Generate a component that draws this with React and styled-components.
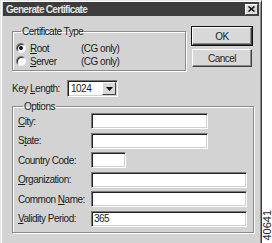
import React from 'react';
import styled, { createGlobalStyle } from 'styled-components';

const GlobalStyle = createGlobalStyle`
  html, body {
    margin: 0;
    padding: 0;
    background: #fff;
  }
  body {
    font-family: "Liberation Sans", Arial, sans-serif;
    font-size: 10px;
    letter-spacing: -0.5px;
    color: #1c1c1c;
    white-space: nowrap;
  }
`;

const Page = styled.div`
  display: flex;
  width: 272px;
  height: 243px;
  overflow: hidden;
`;

const Dialog = styled.div`
  box-sizing: border-box;
  width: 262px;
  height: 250px;
  flex-shrink: 0;
  background: #d3d3d3;
  border-top: 1px solid #e6e6e6;
  border-left: 1px solid #e6e6e6;
  border-right: 1px solid #3a3a3a;
  box-shadow: inset 1px 1px 0 #fff, inset -1px 0 0 #8a8a8a;
  padding: 1px 2px 0 2px;
`;

const TitleBar = styled.div`
  height: 14px;
  background: #3c3c3c;
  display: flex;
  align-items: center;
  justify-content: space-between;
  padding: 0 1px 0 3px;
`;

const Title = styled.span`
  color: #e4e4e4;
  font-weight: bold;
  font-size: 10px;
  letter-spacing: -0.7px;
`;

const CloseButton = styled.div`
  width: 13px;
  height: 11px;
  box-sizing: border-box;
  background: #dcdcdc;
  border-top: 1px solid #fff;
  border-left: 1px solid #fff;
  border-right: 1px solid #444;
  border-bottom: 1px solid #444;
  display: flex;
  align-items: center;
  justify-content: center;
`;

const Body = styled.div`
  padding: 9px 6px 0 9px;
`;

const TopRow = styled.div`
  display: flex;
  align-items: flex-start;
  gap: 6px;
`;

const Group = styled.fieldset`
  margin: 0;
  min-width: 0;
  box-sizing: border-box;
  width: ${(p) => p.$width}px;
  height: ${(p) => p.$height}px;
  padding: ${(p) => p.$pad};
  border: 1px solid #8a8a8a;
  box-shadow: 1px 1px 0 #fff, inset 1px 1px 0 #fff;
`;

const Legend = styled.legend`
  margin-left: 5px;
  padding: 0 1px;
  line-height: 13px;
`;

const RadioList = styled.div`
  display: flex;
  flex-direction: column;
  gap: 1px;
  padding-top: 4px;
`;

const RadioRow = styled.div`
  display: grid;
  grid-template-columns: 10px 47px auto;
  column-gap: 4px;
  align-items: center;
  height: 12px;
`;

const Radio = styled.span`
  width: 10px;
  height: 10px;
  box-sizing: border-box;
  border-radius: 50%;
  background: #fff;
  border: 1px solid;
  border-color: #7a7a7a #f4f4f4 #f4f4f4 #7a7a7a;
  box-shadow: inset 1px 1px 0 #2a2a2a;
  display: flex;
  align-items: center;
  justify-content: center;

  &::after {
    content: '';
    width: 4px;
    height: 4px;
    border-radius: 50%;
    background: ${(p) => (p.$checked ? '#111' : 'transparent')};
  }
`;

const Buttons = styled.div`
  display: flex;
  flex-direction: column;
  gap: 4px;
  margin-top: 2px;
`;

const Button = styled.div`
  width: 60px;
  height: 18px;
  box-sizing: border-box;
  background: #d8d8d8;
  display: flex;
  align-items: center;
  justify-content: center;
  border: 1px solid;
  border-color: #fff #404040 #404040 #fff;
  box-shadow: ${(p) =>
    p.$default ? '0 0 0 1px #111, inset -1px -1px 0 #8a8a8a' : 'inset -1px -1px 0 #8a8a8a'};
`;

const KeyRow = styled.div`
  display: flex;
  align-items: center;
  margin-top: 9px;
`;

const KeyLabel = styled.span`
  width: 55px;
`;

const Select = styled.div`
  width: 51px;
  height: 17px;
  box-sizing: border-box;
  background: #fff;
  border-top: 1px solid #7a7a7a;
  border-left: 1px solid #7a7a7a;
  border-bottom: 1px solid #fff;
  border-right: 1px solid #fff;
  box-shadow: inset 1px 1px 0 #222, inset -1px -1px 0 #d0d0d0;
  display: flex;
  align-items: center;
  padding: 1px 1px 1px 3px;
  justify-content: space-between;
`;

const ArrowButton = styled.div`
  width: 14px;
  height: 13px;
  box-sizing: border-box;
  background: #d8d8d8;
  border: 1px solid;
  border-color: #fff #404040 #404040 #fff;
  display: flex;
  align-items: center;
  justify-content: center;
`;

const OptionsWrap = styled.div`
  margin-top: 3px;
`;

const FieldList = styled.div`
  display: flex;
  flex-direction: column;
  gap: 3.5px;
`;

const FieldRow = styled.div`
  display: grid;
  grid-template-columns: 73px auto;
  align-items: center;
  height: 16px;
`;

const Field = styled.div`
  width: ${(p) => p.$width}px;
  height: 16px;
  box-sizing: border-box;
  background: #fff;
  border-top: 1px solid #7a7a7a;
  border-left: 1px solid #7a7a7a;
  border-bottom: 1px solid #fff;
  border-right: 1px solid #fff;
  box-shadow: inset 1px 1px 0 #222, inset -1px -1px 0 #d0d0d0;
  padding-left: 2px;
  display: flex;
  align-items: center;
`;

const Side = styled.div`
  flex: 1;
  display: flex;
  flex-direction: column;
  justify-content: flex-end;
  align-items: center;
  padding-bottom: 2px;
`;

const FigureNumber = styled.span`
  writing-mode: vertical-rl;
  transform: rotate(180deg);
  font-size: 11px;
  letter-spacing: 0;
  line-height: 10px;
  color: #2a2a2a;
`;

const fields = [
  { label: 'City:', mark: true, width: 117 },
  { label: 'State:', mark: true, at: 1, width: 117 },
  { label: 'Country Code:', width: 35 },
  { label: 'Organization:', mark: true, width: 156 },
  { label: 'Common Name:', mark: true, at: 7, width: 156 },
  { label: 'Validity Period:', mark: true, width: 156, value: '365' },
];

function Mnemonic({ text, at = 0, has = true }) {
  if (!has) return text;
  return (
    <>
      {text.slice(0, at)}
      <u>{text[at]}</u>
      {text.slice(at + 1)}
    </>
  );
}

export default function App() {
  return (
    <>
      <GlobalStyle />
      <Page>
        <Dialog>
          <TitleBar>
            <Title>Generate Certificate</Title>
            <CloseButton>
              <svg width="7" height="6" viewBox="0 0 7 6">
                <path d="M0.5 0.5 L6.5 5.5 M6.5 0.5 L0.5 5.5" stroke="#111" strokeWidth="1.6" />
              </svg>
            </CloseButton>
          </TitleBar>
          <Body>
            <TopRow>
              <Group $width={174} $height={46} $pad="0 0 0 3px">
                <Legend>Certificate Type</Legend>
                <RadioList>
                  <RadioRow>
                    <Radio $checked />
                    <span><Mnemonic text="Root" /></span>
                    <span>(CG only)</span>
                  </RadioRow>
                  <RadioRow>
                    <Radio />
                    <span><Mnemonic text="Server" /></span>
                    <span>(CG only)</span>
                  </RadioRow>
                </RadioList>
              </Group>
              <Buttons>
                <Button $default>OK</Button>
                <Button>Cancel</Button>
              </Buttons>
            </TopRow>
            <KeyRow>
              <KeyLabel>
                <Mnemonic text="Key Length:" at={4} />
              </KeyLabel>
              <Select>
                <span>1024</span>
                <ArrowButton>
                  <svg width="7" height="4" viewBox="0 0 7 4">
                    <path d="M0 0 H7 L3.5 4 Z" fill="#111" />
                  </svg>
                </ArrowButton>
              </Select>
            </KeyRow>
            <OptionsWrap>
              <Group $width={242} $height={133} $pad="0 0 0 5px">
                <Legend>Options</Legend>
                <FieldList>
                  {fields.map((f) => (
                    <FieldRow key={f.label}>
                      <span>
                        <Mnemonic text={f.label} at={f.at || 0} has={!!f.mark} />
                      </span>
                      <Field $width={f.width}>{f.value}</Field>
                    </FieldRow>
                  ))}
                </FieldList>
              </Group>
            </OptionsWrap>
          </Body>
        </Dialog>
        <Side>
          <FigureNumber>40641</FigureNumber>
        </Side>
      </Page>
    </>
  );
}
